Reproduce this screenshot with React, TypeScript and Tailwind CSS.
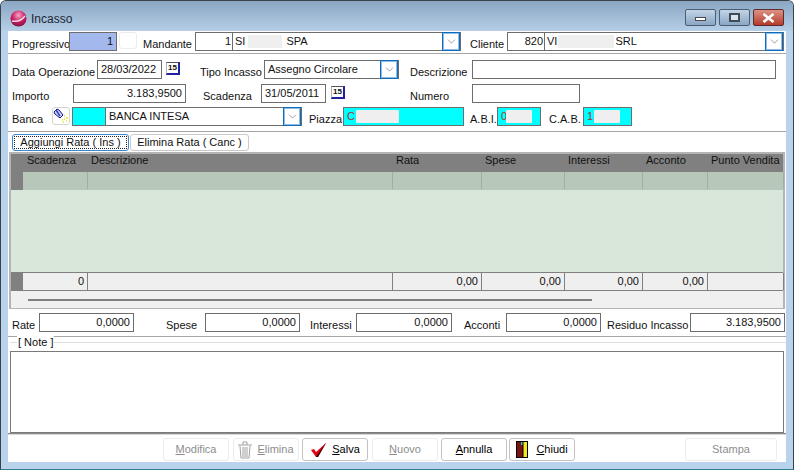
import type { ReactNode } from "react"
import { ChevronDown } from "lucide-react"

function Blur({ className }: { className: string }) {
  return <span className={`inline-block h-[13px] rounded-[1px] bg-[#efefef] ${className}`} />
}

// background comes from the caller, otherwise bg-white would win over bg-[#00ffff]
function Field({ className = "bg-white", children }: { className?: string; children?: ReactNode }) {
  return (
    <div className={`flex h-[19px] shrink-0 items-center overflow-hidden border border-[#6d6d6d] px-[3px] leading-none ${className}`}>
      {children}
    </div>
  )
}

function Label({ className = "", children }: { className?: string; children: ReactNode }) {
  return <span className={`shrink-0 self-end whitespace-nowrap leading-[14px] ${className}`}>{children}</span>
}

function DropButton() {
  return (
    <span className="flex h-[19px] w-[18px] shrink-0 items-center justify-center border border-[#0f6cbd] bg-white shadow-[inset_0_0_0_1px_#8fbce6]">
      <ChevronDown size={13} strokeWidth={1.2} color="#6a6a6a" />
    </span>
  )
}

function Calendar({ className = "" }: { className?: string }) {
  return (
    <span className={`flex h-[13px] w-[14px] shrink-0 items-center justify-center border-t border-r-2 border-b-2 border-l border-t-[#505060] border-r-[#2020a0] border-b-[#2020a0] border-l-[#b0b0c0] bg-white text-[8px] font-bold leading-none ${className}`}>
      15
    </span>
  )
}

function Combo({ code, className, children }: { code: string; className: string; children: ReactNode }) {
  return (
    <div className={`flex h-[19px] shrink-0 items-center border border-[#6d6d6d] bg-white leading-none ${className}`}>
      <span className="w-[36px] pr-[1px] text-right">{code}</span>
      <span className="h-full w-px bg-[#6d6d6d]" />
      <span className="flex flex-1 items-center pl-[2px]">{children}</span>
      <DropButton />
    </div>
  )
}

function Separator() {
  return <div className="h-[2px] border-t border-[#a5a5a5] bg-white" />
}

function ActionButton({ icon, disabled, className = "w-[66px]", children }: { icon?: ReactNode; disabled?: boolean; className?: string; children: ReactNode }) {
  return (
    <button className={`flex h-[23px] shrink-0 items-center justify-center gap-[5px] rounded-[3px] border ${disabled ? "border-[#ececec] text-[#8d8d8d]" : "border-[#c2c2c2] text-black"} bg-white ${className}`}>
      {icon}
      <span>{children}</span>
    </button>
  )
}

function Total({ label, value, labelClass, fieldClass }: { label: string; value: string; labelClass: string; fieldClass: string }) {
  return (
    <>
      <Label className={labelClass}>{label}</Label>
      <Field className={`justify-end bg-white ${fieldClass}`}>{value}</Field>
    </>
  )
}

const columns = [
  { title: "Scadenza", width: "w-[65px]", total: "0", head: "pl-[4px]" },
  { title: "Descrizione", width: "w-[305px]", total: "", head: "pl-[3px]" },
  { title: "Rata", width: "w-[89px]", total: "0,00", head: "pl-[3px]" },
  { title: "Spese", width: "w-[83px]", total: "0,00", head: "pl-[3px]" },
  { title: "Interessi", width: "w-[78px]", total: "0,00", head: "pl-[3px]" },
  { title: "Acconto", width: "w-[65px]", total: "0,00", head: "pl-[3px]" },
  { title: "Punto Vendita", width: "w-[76px]", total: "", head: "pl-[3px]" },
]

function Grid() {
  return (
    <div className="mx-[1px] h-[157px] border-2 border-[#b4b4b4] bg-[#d9e7da]">
      <div className="flex h-[18px] bg-[#808080] text-[#111]">
        <div className="w-[12px] shrink-0" />
        {columns.map((c) => (
          <div key={c.title} className={`shrink-0 whitespace-nowrap leading-[13px] ${c.width} ${c.head}`}>
            {c.title}
          </div>
        ))}
      </div>
      <div className="flex h-[18px] bg-[#b7c7b9]">
        <div className="w-[12px] shrink-0 bg-[#808080]" />
        {columns.map((c) => (
          <div key={c.title} className={`h-[17px] shrink-0 border-r border-[#9fb0a2] ${c.width}`} />
        ))}
      </div>
      <div className="h-[82px]" />
      <div className="flex h-[19px] border-t border-b border-[#808080] bg-[#efefef]">
        <div className="w-[12px] shrink-0 bg-[#808080]" />
        {columns.map((c) => (
          <div key={c.title} className={`shrink-0 border-r border-[#808080] pr-[3px] text-right leading-[17px] ${c.width}`}>
            {c.total}
          </div>
        ))}
      </div>
      <div className="flex h-[17px] items-center bg-[#f0f0f0] pl-[17px]">
        <div className="h-[2px] w-[564px] bg-[#808080]" />
      </div>
    </div>
  )
}

export default function App() {
  return (
    <div className="flex h-[470px] w-[794px] flex-col overflow-hidden rounded-t-[6px] border-x border-t border-b border-[#39434c] border-b-[#2f7f8f] bg-[#b9d3ec] text-[11px] text-[#111] [font-family:Liberation_Sans,Arial,sans-serif]">
      {/* Title bar */}
      <div className="flex h-[30px] shrink-0 items-center bg-gradient-to-b from-[#8ba6c3] to-[#b6cfe7] px-[9px]">
        <svg width="17" height="17" viewBox="0 0 17 17" className="mt-[5px]">
          <defs>
            <radialGradient id="ball" cx="0.5" cy="0.3" r="0.8">
              <stop offset="0" stopColor="#f6a6c8" />
              <stop offset="0.5" stopColor="#c81f62" />
              <stop offset="1" stopColor="#6d0d33" />
            </radialGradient>
          </defs>
          <circle cx="8.5" cy="8.5" r="8" fill="url(#ball)" />
          <path d="M2 11c5 1 10-1 13-5" fill="none" stroke="#f3dbe5" strokeWidth="1.4" />
        </svg>
        <span className="mt-[5px] ml-[4px] text-[12px] text-[#1c2733]">Incasso</span>
        <div className="mt-[3px] ml-auto flex gap-[3px]">
          <span className="flex h-[17px] w-[31px] items-center justify-center rounded-[2px] border border-[#4b5d70] bg-gradient-to-b from-[#c3d4e6] to-[#8aa6c4]">
            <span className="mt-[3px] h-[4px] w-[11px] border border-[#4a4a4a] bg-white" />
          </span>
          <span className="flex h-[17px] w-[31px] items-center justify-center rounded-[2px] border border-[#4b5d70] bg-gradient-to-b from-[#c3d4e6] to-[#8aa6c4]">
            <span className="h-[9px] w-[11px] border-2 border-[#3f4b57] bg-[#d9e3ee]" />
          </span>
          <span className="flex h-[17px] w-[31px] items-center justify-center rounded-[2px] border border-[#5e2a2a] bg-gradient-to-b from-[#dc9186] to-[#b33a29]">
            <svg width="13" height="10" viewBox="0 0 13 10" stroke="#fff" strokeWidth="2.6">
              <path d="M1.5 1l10 8M11.5 1l-10 8" />
            </svg>
          </span>
        </div>
      </div>

      {/* Form */}
      <div className="mx-[7px] flex h-[431px] shrink-0 flex-col bg-white">
        <div className="flex h-[22px] shrink-0 pt-[1px] pl-[4px]">
          <Label className="mb-[2px] w-[57px]">Progressivo</Label>
          <Field className="w-[48px] justify-end bg-[#a3b9ee]">1</Field>
          <span className="ml-[2px] h-[17px] w-[18px] rounded-[3px] border border-[#ececec]" />
          <Label className="mb-[2px] ml-[6px] w-[52px]">Mandante</Label>
          <Combo code="1" className="w-[266px]">
            SI<Blur className="mx-[3px] w-[34px]" />
            <span className="ml-[1px]">SPA</span>
          </Combo>
          <Label className="mb-[2px] ml-[9px] w-[37px]">Cliente</Label>
          <Combo code="820" className="w-[277px]">
            VI<Blur className="mx-[1px] w-[56px]" />
            SRL
          </Combo>
        </div>
        <Separator />

        <div className="mt-[5px] flex h-[19px] shrink-0 pl-[4px]">
          <Label className="w-[85px]">Data Operazione</Label>
          <Field className="w-[65px] bg-white">28/03/2022</Field>
          <Calendar className="mt-[2px] ml-[4px]" />
          <Label className="ml-[20px] w-[64px]">Tipo Incasso</Label>
          <div className="flex h-[19px] w-[135px] shrink-0 items-center border border-[#6d6d6d] pl-[3px] leading-none">
            <span className="flex-1">Assegno Circolare</span>
            <DropButton />
          </div>
          <Label className="ml-[11px] w-[62px]">Descrizione</Label>
          <Field className="w-[304px] bg-white" />
        </div>

        <div className="mt-[5px] flex h-[19px] shrink-0 pl-[4px]">
          <Label className="w-[61px]">Importo</Label>
          <Field className="w-[113px] justify-end bg-white">3.183,9500</Field>
          <Label className="ml-[17px] w-[58px]">Scadenza</Label>
          <Field className="w-[65px] bg-white">31/05/2011</Field>
          <Calendar className="mt-[2px] ml-[5px]" />
          <Label className="ml-[65px] w-[62px]">Numero</Label>
          <Field className="w-[108px] bg-white" />
        </div>

        <div className="mt-[4px] flex h-[19px] shrink-0 pl-[4px]">
          <Label className="w-[40px]">Banca</Label>
          <span className="flex h-[18px] w-[18px] shrink-0 items-center justify-center rounded-[3px] border border-[#d5d5d5]">
            <svg width="16" height="16" viewBox="0 0 16 16">
              <path d="M1 4l3-3 2 1 4 5-3 3-5-4z" fill="#d8dcf8" stroke="#101080" strokeWidth="1" />
              <path d="M3 2l4 6" stroke="#3040c8" strokeWidth="1.6" />
              <path d="M11 8h1M13 10h2M11 11h1M9 12h1M13 13h1M10 14h1" stroke="#e4e020" strokeWidth="1.3" />
            </svg>
          </span>
          <div className="ml-[2px] flex h-[19px] w-[230px] shrink-0 items-center border border-[#6d6d6d] leading-none">
            <span className="h-full w-[33px] border-r border-[#6d6d6d] bg-[#00ffff]" />
            <span className="flex-1 pl-[3px]">BANCA INTESA</span>
            <DropButton />
          </div>
          <Label className="ml-[7px] w-[34px]">Piazza</Label>
          <Field className="w-[121px] bg-[#00ffff] text-[#b03030]">
            C<Blur className="ml-[1px] w-[43px]" />
          </Field>
          <Label className="ml-[6px] w-[27px]">A.B.I.</Label>
          <Field className="w-[44px] bg-[#00ffff] text-[#b03030]">
            0<Blur className="ml-[-1px] w-[26px]" />
          </Field>
          <Label className="ml-[8px] w-[34px]">C.A.B.</Label>
          <Field className="w-[49px] bg-[#00ffff] text-[#b03030]">
            1<Blur className="ml-[1px] w-[26px]" />
          </Field>
        </div>
        <div className="mt-[5px]">
          <Separator />
        </div>

        <div className="mt-[1px] flex h-[17px] shrink-0 gap-[1px] pl-[4px]">
          <button className="flex w-[117px] rounded-[3px] border border-[#3a86d0] p-px leading-none">
            <span className="flex h-full w-full items-center justify-center border border-dotted border-[#222]">Aggiungi Rata ( Ins )</span>
          </button>
          <button className="flex w-[119px] items-center justify-center rounded-[3px] border border-[#c8c8c8] leading-none">
            Elimina Rata ( Canc )
          </button>
        </div>

        <div className="mt-[1px]">
          <Grid />
        </div>

        <div className="mt-[4px] flex h-[19px] shrink-0 pl-[4px]">
          <Total label="Rate" value="0,0000" labelClass="w-[27px]" fieldClass="w-[95px]" />
          <Total label="Spese" value="0,0000" labelClass="ml-[32px] w-[39px]" fieldClass="w-[95px]" />
          <Total label="Interessi" value="0,0000" labelClass="ml-[10px] w-[46px]" fieldClass="w-[96px]" />
          <Total label="Acconti" value="0,0000" labelClass="ml-[12px] w-[42px]" fieldClass="w-[95px]" />
          <Total label="Residuo Incasso" value="3.183,9500" labelClass="ml-[6px] w-[83px]" fieldClass="w-[95px]" />
        </div>

        <div className="mt-[4px] h-px shrink-0 bg-[#a5a5a5]" />
        <div className="relative mt-[5px] ml-[2px] h-[91px] shrink-0 border-t border-[#dedede]">
          <span className="absolute top-[-8px] left-[7px] bg-white px-[1px] leading-[14px]">[ Note ]</span>
          <div className="mt-[8px] h-[82px] w-[774px] border border-[#7a7a7a] bg-white" />
        </div>

        <div className="h-[2px] shrink-0 border-t border-[#8a8a8a] bg-[#d8d8d8]" />
        <div className="mt-[3px] flex shrink-0 pl-[155px]">
          <ActionButton disabled>
            <u>M</u>odifica
          </ActionButton>
          <ActionButton
            disabled
            className="ml-[4px] w-[66px]"
            icon={
              <svg width="14" height="18" viewBox="0 0 14 18" fill="none" stroke="#a0a0a0">
                <path d="M0 4h14M5 4V1h4v3M2 5l1 12h8l1-12M5 6v10M7 6v10M9 6v10" />
              </svg>
            }
          >
            <u>E</u>limina
          </ActionButton>
          <ActionButton
            className="ml-[3px] w-[66px]"
            icon={
              <svg width="17" height="16" viewBox="0 0 17 16">
                <path d="M1 8l3-1 2 3 10-9-8 14H6z" fill="#e00012" />
                <path d="M6 15h2l8-14-1 1-7 10z" fill="#300" />
              </svg>
            }
          >
            <u>S</u>alva
          </ActionButton>
          <ActionButton disabled className="ml-[4px] w-[66px]">
            <u>N</u>uovo
          </ActionButton>
          <ActionButton className="ml-[3px] w-[66px]">
            <u>A</u>nnulla
          </ActionButton>
          <ActionButton
            className="ml-[2px] w-[66px]"
            icon={
              <svg width="12" height="17" viewBox="0 0 12 17" className="mr-[3px]">
                <rect x="0.5" y="0.5" width="11" height="16" fill="#f4e81c" stroke="#000" />
                <path d="M1 1h6v15H1z" fill="#7a1414" />
                <path d="M5 1h2v3H5z" fill="#28c4d4" />
                <path d="M7 1v15" stroke="#000" />
              </svg>
            }
          >
            <u>C</u>hiudi
          </ActionButton>
          <ActionButton disabled className="ml-[110px] w-[92px]">
            Stampa
          </ActionButton>
        </div>
      </div>
    </div>
  )
}
